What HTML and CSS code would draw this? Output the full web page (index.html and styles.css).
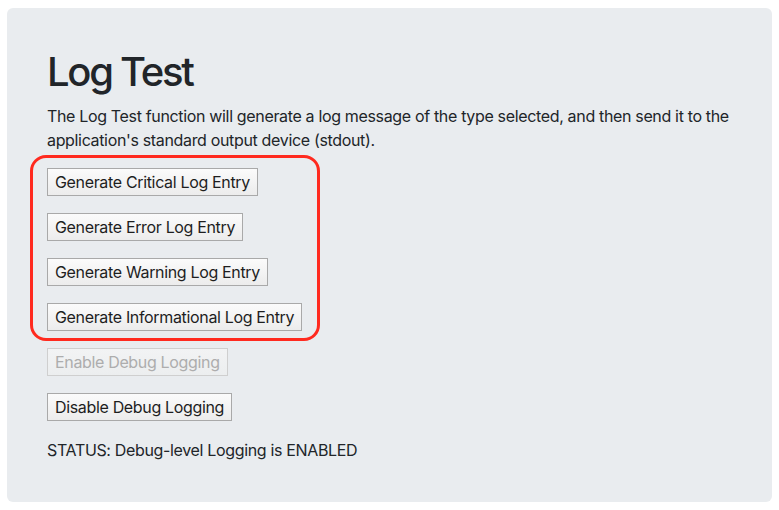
FILE: index.html
```html
<!DOCTYPE html>
<html>
<head>
<meta charset="utf-8">
<link rel="stylesheet" href="styles.css">
</head>
<body>
<div class="panel">
  <h1 class="title">Log Test</h1>
  <p class="lead">The Log Test function will generate a log message of the type selected, and then send it to the application's standard output device (stdout).</p>
  <div class="group">
    <div class="highlight"></div>
    <div class="row"><button class="btn">Generate Critical Log Entry</button></div>
    <div class="row"><button class="btn">Generate Error Log Entry</button></div>
    <div class="row"><button class="btn">Generate Warning Log Entry</button></div>
    <div class="row"><button class="btn">Generate Informational Log Entry</button></div>
  </div>
  <div class="row"><button class="btn" disabled>Enable Debug Logging</button></div>
  <div class="row"><button class="btn">Disable Debug Logging</button></div>
  <p class="status">STATUS: Debug-level Logging is ENABLED</p>
</div>
</body>
</html>
```
FILE: styles.css
```css
html, body {
  margin: 0;
  padding: 0;
  background: #ffffff;
}
body {
  padding: 8px 7px 8px 7px;
  font-family: Inter, "Noto Sans", sans-serif;
  color: #212529;
  letter-spacing: -0.34px;
}
.panel {
  background: #e9ecef;
  border-radius: 6px;
  padding: 40px 40px 40px 40px;
  display: flex;
  flex-direction: column;
  align-items: flex-start;
}
.title {
  font-size: 40px;
  font-weight: 500;
  line-height: 48px;
  letter-spacing: -2.3px;
  margin: 0 0 8px 0;
}
.lead {
  font-size: 16px;
  line-height: 24px;
  margin: 0 0 16px 0;
}
.group {
  position: relative;
  display: flex;
  flex-direction: column;
  align-items: flex-start;
  gap: 17px;
  margin-bottom: 17px;
}
.highlight {
  position: absolute;
  left: -17px;
  top: -13px;
  width: 290px;
  height: 186px;
  box-sizing: border-box;
  border: 3px solid #ff2a1f;
  border-radius: 16px;
  pointer-events: none;
}
.row {
  display: flex;
}
.panel > .row {
  margin-bottom: 17px;
}
.btn {
  font-family: inherit;
  font-size: 16px;
  line-height: 20px;
  letter-spacing: -0.34px;
  color: #1e1e1e;
  padding: 3px 7px;
  border: 1px solid #a9a9a9;
  border-radius: 0;
  background: linear-gradient(#fbfbfb, #ececec);
  margin: 0;
}
.btn:disabled {
  color: #adadad;
  border-color: #cfcfcf;
  background: linear-gradient(#f2f3f4, #eceeef);
}
.status {
  font-size: 16px;
  line-height: 24px;
  margin: 0;
}
```
